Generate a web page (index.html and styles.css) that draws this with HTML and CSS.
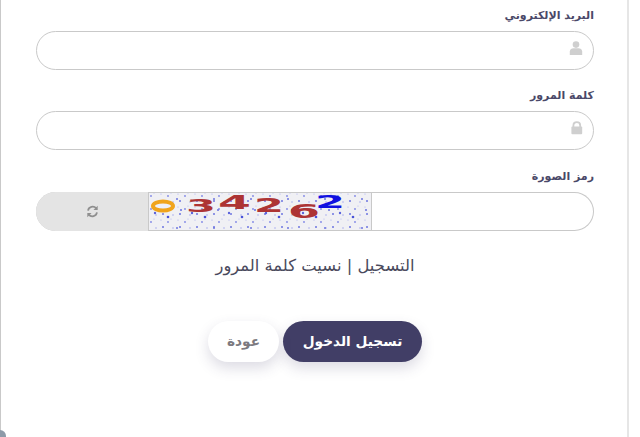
FILE: index.html
```html
<!DOCTYPE html>
<html lang="ar" dir="rtl">
<head>
<meta charset="utf-8">
<title>تسجيل الدخول</title>
<link rel="stylesheet" href="styles.css">
</head>
<body>
<main class="card">
  <form class="form">
    <div class="field">
      <label class="label">البريد الإلكتروني</label>
      <div class="control">
        <svg class="icon" viewBox="0 0 14 14" width="14" height="14"><circle cx="7" cy="3.6" r="3.3" fill="#cfcfcf"/><path d="M0.8 14V10.6C0.8 8.4 2.6 7.2 4.6 7.2H9.4C11.4 7.2 13.2 8.4 13.2 10.6V14Z" fill="#cfcfcf"/></svg>
      </div>
    </div>
    <div class="field">
      <label class="label">كلمة المرور</label>
      <div class="control">
        <svg class="icon" viewBox="0 0 14 14" width="14" height="14"><path d="M4.4 6.5V4.4C4.4 2.5 5.9 1.2 7.8 1.2S11.2 2.5 11.2 4.4V6.5" fill="none" stroke="#cfcfcf" stroke-width="1.8"/><rect x="2.4" y="5.6" width="10.8" height="7.6" rx="1" fill="#cfcfcf"/></svg>
      </div>
    </div>
    <div class="field">
      <label class="label">رمز الصورة</label>
      <div class="control captcha-row">
        <div class="captcha-input"></div>
        <svg class="captcha" viewBox="0 0 224 39" width="224" height="39">
          <defs>
            <filter id="soft" x="0" y="0" width="100%" height="100%"><feGaussianBlur stdDeviation="0.45"/></filter>
            <pattern id="dots" width="17" height="13" patternUnits="userSpaceOnUse">
              <circle cx="3" cy="4" r="0.9" fill="#7f86e6"/>
              <circle cx="13" cy="2" r="0.6" fill="#a3a8ee"/>
              <circle cx="15" cy="9" r="1" fill="#6d75e0"/>
              <circle cx="8" cy="10" r="0.7" fill="#989eec"/>
              <circle cx="6" cy="1" r="0.6" fill="#b0b4f0"/>
            </pattern>
            <pattern id="dots2" width="37" height="29" patternUnits="userSpaceOnUse">
              <circle cx="7" cy="21" r="1.2" fill="#5a63dc"/>
              <circle cx="29" cy="7" r="1" fill="#6d75e0"/>
              <circle cx="20" cy="25" r="1.3" fill="#4a53d8"/>
              <circle cx="33" cy="18" r="1.1" fill="#7079e2"/>
            </pattern>
          </defs>
          <rect width="224" height="39" fill="#f0f0f4"/>
          <g filter="url(#soft)">
            <rect width="224" height="39" fill="url(#dots)"/>
            <rect width="224" height="39" fill="url(#dots2)"/>
          </g>
          <ellipse cx="15" cy="14" rx="10" ry="4.6" fill="#eef0fa" stroke="#f0a41c" stroke-width="4"/>
          <text class="d" x="38" y="20" font-size="17" textLength="30" lengthAdjust="spacingAndGlyphs">3</text>
          <text class="d" x="70" y="17" font-size="19" textLength="33" lengthAdjust="spacingAndGlyphs">4</text>
          <text class="d" x="106" y="20" font-size="19" textLength="30" lengthAdjust="spacingAndGlyphs">2</text>
          <text class="d" x="140" y="26" font-size="19" textLength="32" lengthAdjust="spacingAndGlyphs">6</text>
          <text class="d blue" x="167" y="16" font-size="17" textLength="30" lengthAdjust="spacingAndGlyphs">2</text>
          <rect x="0.5" y="0.5" width="223" height="38" fill="none" stroke="#c9c9c9"/>
        </svg>
        <button type="button" class="refresh" aria-label="تحديث">
          <svg viewBox="0 0 14 14" width="13" height="13"><path d="M2.2 6A5 5 0 0 1 11 3.6" fill="none" stroke="#8f8f8f" stroke-width="1.9"/><path d="M12.6 0.8V5.4H8Z" fill="#8f8f8f"/><path d="M11.8 8A5 5 0 0 1 3 10.4" fill="none" stroke="#8f8f8f" stroke-width="1.9"/><path d="M1.4 13.2V8.6H6Z" fill="#8f8f8f"/></svg>
        </button>
      </div>
    </div>
    <p class="links">التسجيل | نسيت كلمة المرور</p>
    <div class="actions">
      <button type="button" class="btn primary">تسجيل الدخول</button>
      <button type="button" class="btn ghost">عودة</button>
    </div>
  </form>
  <span class="corner"></span>
</main>
</body>
</html>
```
FILE: styles.css
```css
* { box-sizing: border-box; }
html, body { margin: 0; height: 100%; background: #fff; overflow: hidden; }
body { width: 640px; height: 437px; font-family: "DejaVu Sans", "Noto Sans", sans-serif; }
.card {
  position: relative;
  width: 629px;
  height: 437px;
  margin-right: 11px;
  border-right: 2px solid #e6e6e6;
  border-left: 1px solid #c9c9c9;
  padding: 0 33px 0 35px;
  background: #fff;
}
.form { display: flex; flex-direction: column; padding-top: 8px; }
.field { display: flex; flex-direction: column; height: 80.4px; flex: none; }
.label {
  height: 23px;
  font-size: 11px;
  line-height: 16px;
  font-weight: 700;
  color: #4a4868;
}
.control {
  height: 39px;
  flex: none;
  border: 1px solid #c9c9c9;
  border-radius: 20px;
  display: flex;
  align-items: center;
  padding-right: 10px;
}
.icon { display: block; margin-bottom: 6px; }
.captcha-row {
  padding: 0;
  overflow: hidden;
  border: 0;
  box-shadow: inset 0 0 0 1px #c9c9c9;
}
.captcha-input { width: 222px; flex: none; }
.captcha { display: block; flex: none; width: 224px; height: 39px; direction: ltr; }
.d { font-family: "DejaVu Sans", sans-serif; font-weight: 700; fill: #ad3434; }
.blue { fill: #1010e0; }
.refresh {
  flex: 1;
  height: 100%;
  border: 0;
  padding: 0;
  background: #e4e4e4;
  display: flex;
  align-items: center;
  justify-content: center;
}
.links {
  margin: 7px 0 0;
  height: 24px;
  text-align: center;
  font-size: 16.4px;
  line-height: 20px;
  color: #4a4a5c;
}
.actions { display: flex; justify-content: center; gap: 4px; margin-top: 40.8px; }
.btn {
  height: 41px;
  border: 0;
  border-radius: 21px;
  font-family: inherit;
  font-size: 13.7px;
  font-weight: 700;
  padding: 0 0 1px;
  box-shadow: 0 6px 14px rgba(60, 58, 100, 0.18);
}
.primary { width: 139px; background: #413e66; color: #fff; }
.ghost { width: 71px; background: #fff; color: #7d7a80; }
.corner {
  position: absolute;
  left: -1px;
  bottom: 0;
  width: 6px;
  height: 7px;
  background: #8d9aa8;
  border-top-right-radius: 6px;
}
```
